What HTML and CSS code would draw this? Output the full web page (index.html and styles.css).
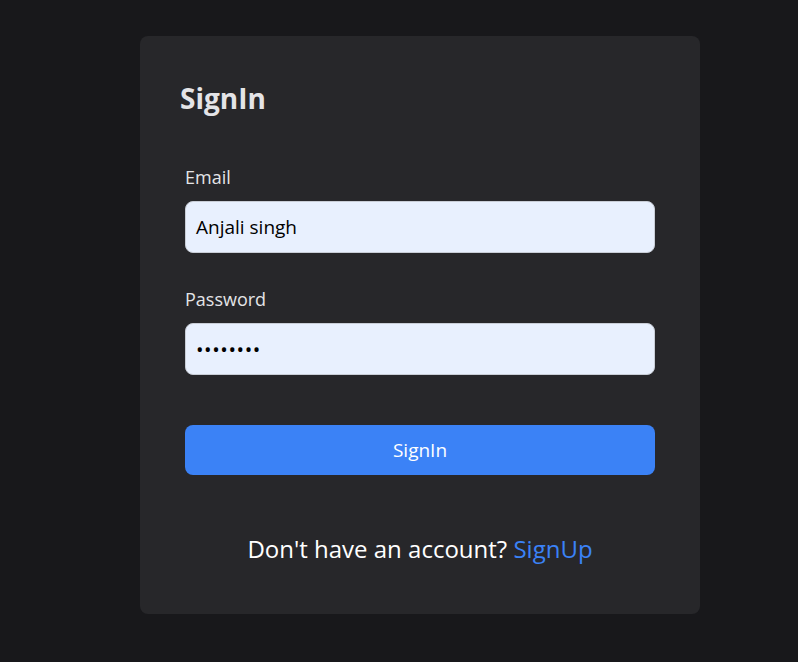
FILE: index.html
```html
<!DOCTYPE html>
<html>
<head>
<meta charset="utf-8">
<link rel="stylesheet" href="styles.css">
</head>
<body>
<div class="page">
  <div class="card">
    <h1 class="title">SignIn</h1>
    <form class="form">
      <div class="field">
        <label class="label">Email</label>
        <div class="input">Anjali singh</div>
      </div>
      <div class="field">
        <label class="label">Password</label>
        <div class="input dots">••••••••</div>
      </div>
      <button class="btn" type="button">SignIn</button>
    </form>
    <p class="footer">Don't have an account? <a class="link">SignUp</a></p>
  </div>
</div>
</body>
</html>
```
FILE: styles.css
```css
* { box-sizing: border-box; }
html, body { margin: 0; padding: 0; }
body {
  background: #18181b;
  font-family: "Open Sans", "Noto Sans", sans-serif;
  width: 798px;
  height: 662px;
  overflow: hidden;
}
.page {
  display: flex;
  justify-content: center;
  padding-top: 36px;
  padding-left: 42px;
}
.card {
  width: 560px;
  height: 578px;
  background: #27272a;
  border-radius: 8px;
  padding: 40px 40px 0 40px;
}
.title {
  margin: 0;
  color: #e4e4e7;
  font-size: 28px;
  font-weight: 700;
  line-height: 44px;
}
.form {
  margin: 0 5px;
  padding-top: 45px;
  display: flex;
  flex-direction: column;
}
.field {
  display: flex;
  flex-direction: column;
  gap: 12px;
  margin-bottom: 34px;
}
.field:last-of-type { margin-bottom: 27px; }
.label {
  color: #e4e4e7;
  font-size: 18px;
  line-height: 24px;
}
.input {
  height: 52px;
  background: #e8f0fe;
  border: 1px solid #c8cdd6;
  border-radius: 8px;
  padding: 0 10px;
  display: flex;
  align-items: center;
  font-size: 19px;
  color: #000;
}
.dots { font-size: 20px; letter-spacing: 0.6px; }
.btn {
  margin-top: 23px;
  height: 50px;
  border: none;
  border-radius: 8px;
  background: #3b82f6;
  color: #fff;
  font-family: inherit;
  font-size: 19px;
}
.footer {
  margin: 58px 0 0 0;
  text-align: center;
  color: #fff;
  font-size: 24px;
  line-height: 32px;
}
.link { color: #3b82f6; }
```
